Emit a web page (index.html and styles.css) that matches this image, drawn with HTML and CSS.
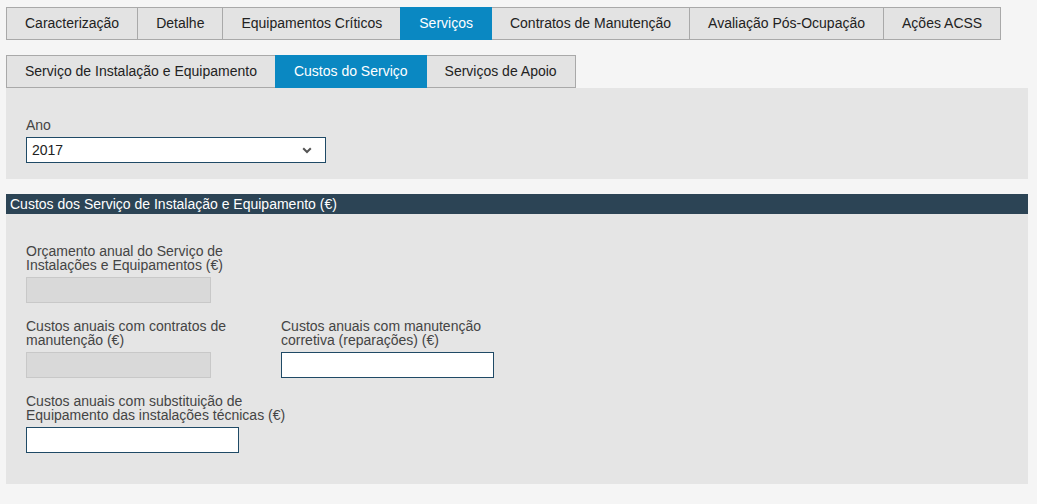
FILE: index.html
```html
<!DOCTYPE html>
<html lang="pt">
<head>
<meta charset="utf-8">
<title>Custos do Serviço</title>
<link rel="stylesheet" href="styles.css">
</head>
<body>
<nav class="tabs main-tabs">
  <a class="tab">Caracterização</a>
  <a class="tab">Detalhe</a>
  <a class="tab">Equipamentos Críticos</a>
  <a class="tab active">Serviços</a>
  <a class="tab">Contratos de Manutenção</a>
  <a class="tab">Avaliação Pós-Ocupação</a>
  <a class="tab">Ações ACSS</a>
</nav>
<nav class="tabs sub-tabs">
  <a class="tab">Serviço de Instalação e Equipamento</a>
  <a class="tab active">Custos do Serviço</a>
  <a class="tab">Serviços de Apoio</a>
</nav>
<section class="panel year-panel">
  <div class="field">
    <label class="label">Ano</label>
    <div class="select">
      <span>2017</span>
      <svg class="chev" width="10" height="7" viewBox="0 0 10 7"><path d="M1.2 1.2 L5 5 L8.8 1.2" fill="none" stroke="#555" stroke-width="2"/></svg>
    </div>
  </div>
</section>
<h2 class="bar">Custos dos Serviço de Instalação e Equipamento (€)</h2>
<section class="panel costs-panel">
  <div class="row">
    <div class="field col">
      <label class="label">Orçamento anual do Serviço de Instalações e Equipamentos (€)</label>
      <div class="input disabled short"></div>
    </div>
  </div>
  <div class="row">
    <div class="field col">
      <label class="label">Custos anuais com contratos de manutenção (€)</label>
      <div class="input disabled short"></div>
    </div>
    <div class="field col">
      <label class="label">Custos anuais com manutenção corretiva (reparações) (€)</label>
      <div class="input"></div>
    </div>
  </div>
  <div class="row">
    <div class="field col wide">
      <label class="label">Custos anuais com substituição de Equipamento das instalações técnicas (€)</label>
      <div class="input"></div>
    </div>
  </div>
</section>
</body>
</html>
```
FILE: styles.css
```css
* { box-sizing: border-box; }
html, body { margin: 0; }
body {
  background: #f5f5f5;
  font-family: "Liberation Sans", Arial, sans-serif;
  font-size: 14px;
  color: #333;
  padding: 7px 9px 0 6px;
}
.tabs {
  display: flex;
}
.tab {
  display: block;
  height: 33px;
  line-height: 31px;
  padding: 0 18px;
  border: 1px solid #a9a9a9;
  background: #e3e3e3;
  color: #222;
  white-space: nowrap;
}
.tab + .tab { margin-left: -1px; }
.tab.active {
  background: #0a88c2;
  border-color: #0a88c2;
  color: #fff;
  position: relative;
}
.sub-tabs { margin-top: 15px; }
.panel {
  background: #e5e5e5;
  width: 1022px;
}
.year-panel { padding: 30px 20px 16px; }
.label {
  display: block;
  line-height: 14px;
  color: #444;
}
.field .label { margin-bottom: 5px; }
.select {
  width: 300px;
  height: 26px;
  background: #fff;
  border: 1px solid #1f4a66;
  display: flex;
  align-items: center;
  justify-content: space-between;
  padding: 0 13px 0 5px;
  color: #222;
}
.chev { display: block; }
.bar {
  margin: 15px 0 0;
  width: 1022px;
  height: 20px;
  line-height: 20px;
  background: #2c4455;
  color: #fff;
  font-size: 14px;
  font-weight: normal;
  padding-left: 4px;
}
.costs-panel { padding: 30px 20px 31px; }
.row { display: flex; }
.row + .row { margin-top: 16px; }
.col { width: 255px; }
.col .label { width: 240px; }
.col.wide { width: 300px; }
.col.wide .label { width: 275px; }
.input {
  width: 213px;
  height: 26px;
  background: #fff;
  border: 1px solid #1f4a66;
}
.input.short { width: 185px; }
.input.disabled {
  background: #d9d9d9;
  border-color: #c8c8c8;
}
```
